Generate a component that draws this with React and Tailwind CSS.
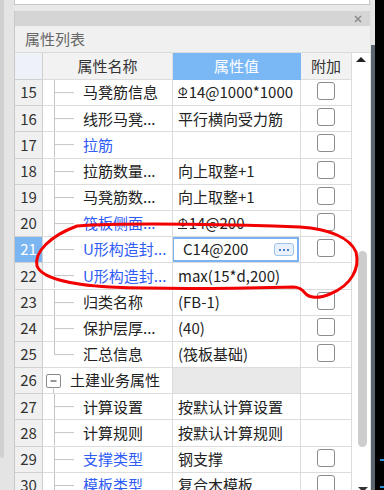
import React from "react";

const BLUE = "text-[#2f5cf5]";

function Rebar() {
  return (
    <span className="inline-flex flex-col items-center mr-[1px] relative top-[-1px]">
      <span className="text-[12px] leading-[12px]">Φ</span>
      <span className="w-[9px] h-px bg-[#222]"></span>
    </span>
  );
}

const rows = [
  { n: 15, name: "马凳筋信息", val: <><Rebar />14@1000*1000</>, chk: true },
  { n: 16, name: "线形马凳...", val: "平行横向受力筋", chk: true },
  { n: 17, name: "拉筋", blue: true, val: "", chk: true },
  { n: 18, name: "拉筋数量...", val: "向上取整+1", chk: true },
  { n: 19, name: "马凳筋数...", val: "向上取整+1", chk: true },
  { n: 20, name: "筏板侧面...", blue: true, val: <><Rebar />14@200</>, chk: true },
  { n: 21, name: "U形构造封...", blue: true, edit: "C14@200", chk: true, sel: true },
  { n: 22, name: "U形构造封...", blue: true, val: "max(15*d,200)", chk: false },
  { n: 23, name: "归类名称", val: "(FB-1)", chk: true },
  { n: 24, name: "保护层厚...", val: "(40)", chk: true },
  { n: 25, name: "汇总信息", val: "(筏板基础)", chk: true, last: true },
  { n: 26, group: "土建业务属性" },
  { n: 27, name: "计算设置", val: "按默认计算设置", chk: false },
  { n: 28, name: "计算规则", val: "按默认计算规则", chk: false },
  { n: 29, name: "支撑类型", blue: true, val: "钢支撑", chk: true },
  { n: 30, name: "模板类型", blue: true, val: "复合木模板", chk: true },
];

function Tree({ last }) {
  return (
    <svg width="40" height="100%" className="shrink-0 h-full">
      <line x1="11.5" y1="0" x2="11.5" y2={last ? "50%" : "100%"} stroke="#c4c4c4" strokeWidth="1" />
      <line x1="11.5" y1="50%" x2="31" y2="50%" stroke="#c4c4c4" strokeWidth="1" />
    </svg>
  );
}

function Minus() {
  return (
    <svg width="27" height="100%" className="shrink-0 h-full">
      <rect x="3.5" y="6.5" width="14" height="13" rx="1.5" fill="white" stroke="#8a8a8a" strokeWidth="1" />
      <line x1="7.5" y1="13" x2="13.5" y2="13" stroke="#333" strokeWidth="1" />
      <line x1="10.5" y1="19.5" x2="10.5" y2="100%" stroke="#c4c4c4" strokeWidth="1" />
    </svg>
  );
}

function Check() {
  return <div className="w-[18px] h-[18px] rounded-[3px] border-[1.5px] border-[#8c8c8c] bg-white mb-[3px]"></div>;
}

function Row({ r }) {
  return (
    <div className="flex h-[26.2px] shrink-0">
      <div
        className={
          "w-[28px] shrink-0 border-r border-b border-[#d0d0d0] flex items-center justify-center text-[15px] " +
          (r.sel ? "bg-[#7cb6f2] text-white" : "bg-[#f0f0f0] text-[#333]")
        }
      >
        {r.n}
      </div>
      {r.group ? (
        <>
          <div className="w-[130px] shrink-0 border-r border-b border-[#dcdcdc] bg-white flex items-center text-[15px] text-[#222]">
            <Minus />
            <span className="whitespace-nowrap">{r.group}</span>
          </div>
          <div className="w-[128px] shrink-0 border-r border-b border-[#dcdcdc] bg-[#e9e9e9]"></div>
          <div className="w-[51px] shrink-0 border-r border-b border-[#dcdcdc] bg-white"></div>
        </>
      ) : (
        <>
          <div className={"w-[130px] shrink-0 border-r border-b border-[#dcdcdc] bg-white flex items-center text-[15px] " + (r.blue ? BLUE : "text-[#222]")}>
            <Tree last={r.last} />
            <span className="whitespace-nowrap">{r.name}</span>
          </div>
          <div className="w-[128px] shrink-0 border-r border-b border-[#dcdcdc] bg-white flex items-center text-[15px] text-[#222] overflow-hidden">
            {r.edit ? (
              <div className="w-full h-full border-2 border-[#7ab3ef] flex items-center pl-[9px] pr-[3px] -ml-px">
                <span className="flex-1">{r.edit}</span>
                <div className="w-[20px] h-[13px] rounded-[3px] border border-[#9cc3ea] bg-[#e8f1fb] flex items-center justify-center gap-[2px]">
                  <span className="w-[2px] h-[2px] bg-[#4a7fc0]"></span>
                  <span className="w-[2px] h-[2px] bg-[#4a7fc0]"></span>
                  <span className="w-[2px] h-[2px] bg-[#4a7fc0]"></span>
                </div>
              </div>
            ) : (
              <span className="pl-[5px] whitespace-nowrap flex items-center">{r.val}</span>
            )}
          </div>
          <div className="w-[51px] shrink-0 border-r border-b border-[#dcdcdc] bg-white flex items-center justify-center">
            {r.chk && <Check />}
          </div>
        </>
      )}
    </div>
  );
}

export default function App() {
  return (
    <div
      className="w-[384px] h-[490px] overflow-hidden relative flex bg-[#e8e8e8]"
      style={{ fontFamily: '"Noto Sans CJK SC", "Noto Sans", sans-serif' }}
    >
      {/* left strip */}
      <div className="w-[14px] shrink-0 bg-[#e4e4e4] flex">
        <div className="w-[4px] h-[458px] bg-[#d0d0d0] rounded-b-[3px]"></div>
      </div>

      {/* main panel */}
      <div className="w-[356px] shrink-0 flex flex-col h-[490px] overflow-hidden">
        <div className="h-[5px] shrink-0 bg-white border-l border-r border-b border-[#c8c8c8]"></div>
        <div className="h-[6px] shrink-0 bg-[#e8e8e8]"></div>
        <div className="h-[15px] shrink-0 bg-[#d5d5d5] border-l border-[#c8c8c8] flex items-center justify-end pr-[8px]">
          <svg width="8" height="8" viewBox="0 0 8 8">
            <line x1="1" y1="1" x2="7" y2="7" stroke="#8a8a8a" strokeWidth="1.5" />
            <line x1="7" y1="1" x2="1" y2="7" stroke="#8a8a8a" strokeWidth="1.5" />
          </svg>
        </div>
        <div className="h-[27px] shrink-0 bg-[#f0f0f0] border-l border-b border-[#c8c8c8] border-b-[#dadada] flex items-center pl-[10px] text-[15px] text-[#666]">
          属性列表
        </div>
        <div className="flex-1 min-h-0 overflow-hidden flex border-l border-[#c8c8c8] bg-white">
          <div className="w-[337px] shrink-0 flex flex-col">
            <div className="flex h-[27px] shrink-0 text-[15px] text-[#333]">
              <div className="w-[28px] shrink-0 bg-[#eef2f8] border-r border-b border-[#d0d0d0]"></div>
              <div className="w-[130px] shrink-0 bg-[#f2f2f2] border-r border-b border-[#dcdcdc] flex items-center justify-center">属性名称</div>
              <div className="w-[128px] shrink-0 bg-[#7ab8f5] text-white border-r border-b border-[#7ab8f5] flex items-center justify-center">属性值</div>
              <div className="w-[51px] shrink-0 bg-[#f2f2f2] border-r border-b border-[#dcdcdc] flex items-center justify-center">附加</div>
            </div>
            {rows.map((r) => (
              <Row key={r.n} r={r} />
            ))}
          </div>
          <div className="w-[18px] shrink-0 bg-white flex flex-col items-center">
            <div className="mt-[4px] shrink-0 w-0 h-0 border-l-[5px] border-r-[5px] border-b-[5px] border-l-transparent border-r-transparent border-b-[#222]"></div>
            <div className="mt-[189px] shrink-0 w-[9px] h-[196px] rounded-full bg-[#cdcdcd] ml-[2px]"></div>
            <div className="mt-[40px] shrink-0 w-0 h-0 border-l-[5px] border-r-[5px] border-t-[5px] border-l-transparent border-r-transparent border-t-[#333] ml-[4px]"></div>
          </div>
        </div>
      </div>

      {/* right strip */}
      <div className="w-px shrink-0 bg-[#e2e2e2]"></div>
      <div className="w-[4px] shrink-0 flex flex-col">
        <div className="h-[45px] shrink-0 bg-[#e6e6e6]"></div>
        <div className="flex-1 bg-[#5b6670]"></div>
      </div>
      <div className="w-[9px] shrink-0 bg-black flex flex-col items-end">
        <div className="mt-[459px] shrink-0 w-[4px] h-[2px] bg-[#2a8fd8]"></div>
        <div className="mt-[25px] shrink-0 w-[4px] h-[2px] bg-[#2a8fd8]"></div>
      </div>

      {/* red annotation */}
      <svg className="absolute inset-0 pointer-events-none" width="384" height="490">
        <path
          d="M 77 226 C 130 222, 250 225, 300 227 C 330 229, 350 238, 356 252 C 360 268, 352 285, 330 294 C 318 299, 309 298, 305 293 C 302 289, 298 287, 293 287 C 250 288, 180 290, 110 287 C 70 285, 42 278, 37 266 C 34 252, 50 236, 77 226"
          fill="none"
          stroke="#f20000"
          strokeWidth="3"
          strokeLinecap="round"
          strokeLinejoin="round"
        />
      </svg>
    </div>
  );
}
